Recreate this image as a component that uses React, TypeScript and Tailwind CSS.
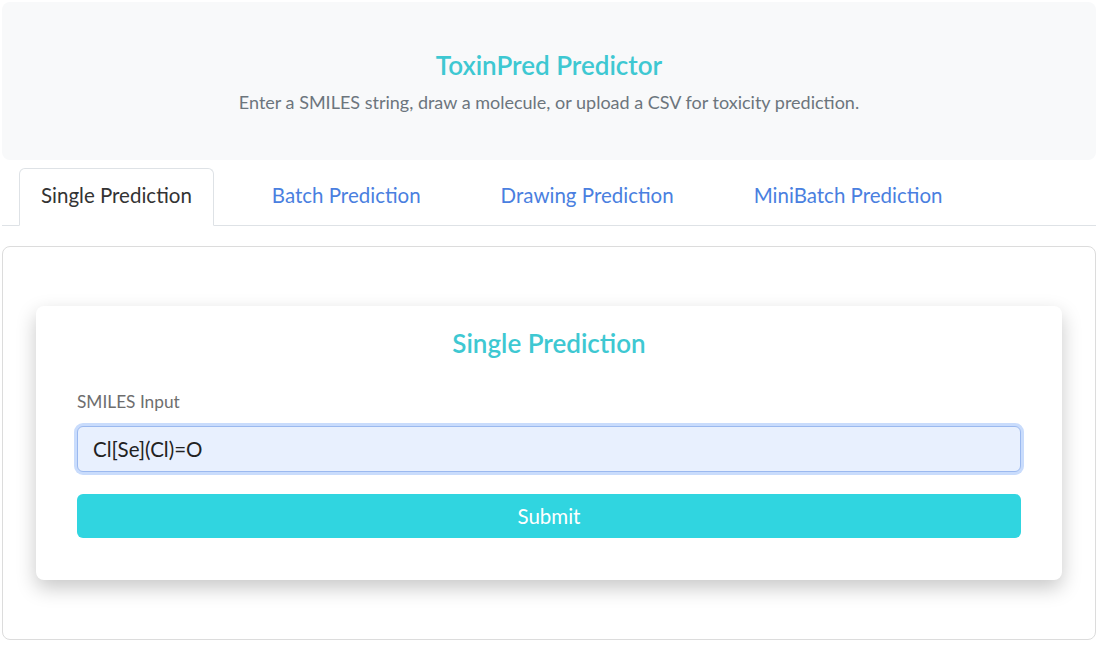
import React, { useState } from 'react';

const tabs = ['Single Prediction', 'Batch Prediction', 'Drawing Prediction', 'MiniBatch Prediction'];

const App: React.FC = () => {
    const [active, setActive] = useState(0);
    const [smiles, setSmiles] = useState('Cl[Se](Cl)=O');

    return (
        <div className="min-h-screen bg-white pl-[2px] pr-[11px] pt-[2px] font-['Lato',sans-serif]">
            {/* header */}
            <header className="flex h-[158px] flex-col items-center justify-center rounded-lg bg-[#f8f9fa]">
                <h1 className="text-[26px] font-semibold text-[#3ec8d2]">ToxinPred Predictor</h1>
                <p className="mt-[4px] text-[18px] text-[#6c757d]">
                    Enter a SMILES string, draw a molecule, or upload a CSV for toxicity prediction.
                </p>
            </header>

            {/* tabs */}
            <nav className="mt-[8px] flex gap-[36px] border-b border-[#dee2e6] pl-[17px]">
                {tabs.map((t, i) => (
                    <button
                        key={t}
                        onClick={() => setActive(i)}
                        className={`-mb-px h-[58px] rounded-t-md border px-[21px] pb-[4px] text-[20.5px] ${
                            i === active
                                ? 'border-[#dee2e6] border-b-white bg-white text-[#333]'
                                : 'border-transparent text-[#4a7fe0]'
                        }`}
                    >
                        {t}
                    </button>
                ))}
            </nav>

            {/* content */}
            <section className="mt-[20px] rounded-lg border border-[#dcdcdc] px-[33px] py-[59px]">
                <div className="rounded-lg bg-white px-[41px] pt-[18px] pb-[42px] shadow-[0_8px_20px_rgba(0,0,0,0.22)]">
                    <h2 className="text-center text-[26px] font-semibold text-[#3ec8d2]">{tabs[active]}</h2>
                    <label className="mt-[26px] block text-[17.3px] text-[#6e6e6e]">SMILES Input</label>
                    <input
                        autoFocus
                        value={smiles}
                        onChange={e => setSmiles(e.target.value)}
                        className="mt-[11px] h-[46px] w-full rounded-md border border-[#9bb9ef] bg-[#e8f0fe] px-[15px] text-[20.5px] text-[#222] caret-[#222] outline-none ring-[3px] ring-[#c9dcfc]"
                    />
                    <button className="mt-[22px] h-[44px] w-full rounded-md bg-[#30d5e0] text-[20.5px] text-white">
                        Submit
                    </button>
                </div>
            </section>
        </div>
    );
};

export default App;
